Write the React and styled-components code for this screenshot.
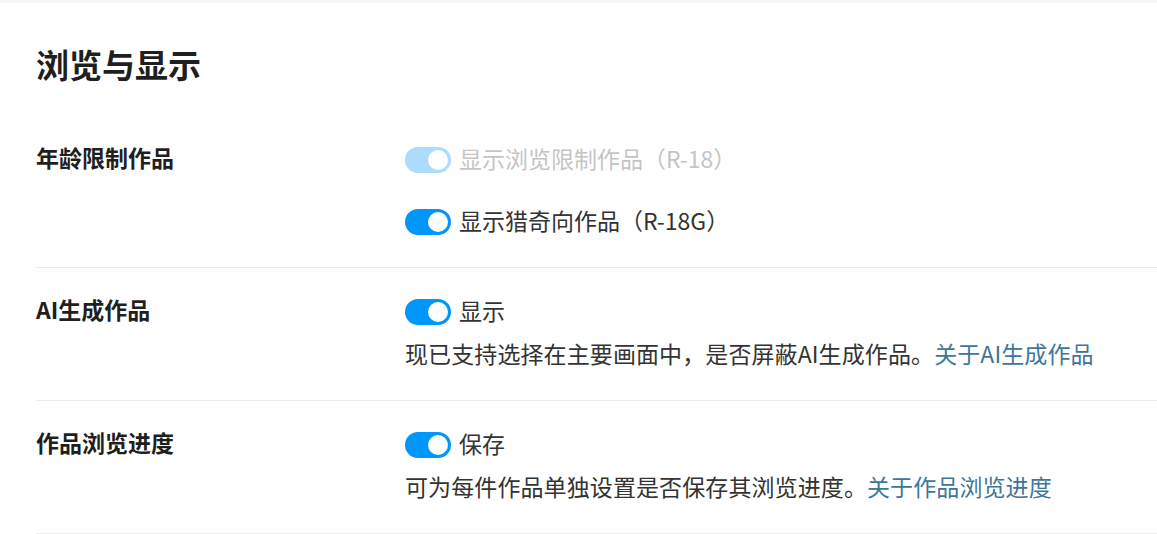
import React from 'react';
import styled, { createGlobalStyle } from 'styled-components';

const GlobalStyle = createGlobalStyle`
  body {
    margin: 0;
    background: #f5f5f5;
    font-family: "Noto Sans CJK SC", "Noto Sans", sans-serif;
  }
`;

const Page = styled.div`
  padding-top: 3px;
  overflow: hidden;
`;

const Card = styled.section`
  background: #ffffff;
  padding: 37px 0 0 36px;
  min-height: 531px;
  box-sizing: border-box;
`;

const Title = styled.h2`
  margin: 0 0 28px;
  font-size: 33px;
  line-height: 48px;
  font-weight: 700;
  color: #1f1f1f;
`;

const Row = styled.div`
  display: grid;
  grid-template-columns: 369px 1fr;
  padding: 31px 0 32px;
  border-bottom: 1px solid #ebebeb;
`;

const Label = styled.div`
  margin-top: -3px;
  font-size: 23px;
  line-height: 26px;
  font-weight: 700;
  color: #1f1f1f;
`;

const Options = styled.div`
  display: flex;
  flex-direction: column;
  gap: 36px;
`;

const Group = styled.div`
  display: flex;
  flex-direction: column;
`;

const OptionLine = styled.label`
  display: flex;
  align-items: center;
  gap: 8px;
  font-size: 23px;
  line-height: 26px;
  color: ${(p) => (p.disabled ? '#c5c5c5' : '#333333')};
  white-space: nowrap;
`;

const OptionText = styled.span`
  margin-top: -5px;
`;

const Track = styled.span`
  position: relative;
  flex: none;
  width: 46px;
  height: 26px;
  border-radius: 13px;
  background: #0096fa;
  opacity: ${(p) => (p.disabled ? 0.32 : 1)};
`;

const Knob = styled.span`
  position: absolute;
  top: 3px;
  right: 3px;
  width: 20px;
  height: 20px;
  border-radius: 50%;
  background: #ffffff;
`;

const Description = styled.p`
  margin: 15px 0 2px;
  font-size: 23px;
  line-height: 26px;
  color: #333333;
  white-space: nowrap;
  letter-spacing: 0.1px;
`;

const Link = styled.a`
  color: #3d7699;
  text-decoration: none;
`;

const Toggle = ({ disabled, children }) => (
  <OptionLine disabled={disabled}>
    <Track disabled={disabled}>
      <Knob />
    </Track>
    <OptionText>{children}</OptionText>
  </OptionLine>
);

const App = () => {
  return (
    <Page>
      <GlobalStyle />
      <Card>
        <Title>浏览与显示</Title>
        <Row>
          <Label>年龄限制作品</Label>
          <Options>
            <Toggle disabled>显示浏览限制作品（R-18）</Toggle>
            <Toggle>显示猎奇向作品（R-18G）</Toggle>
          </Options>
        </Row>
        <Row>
          <Label>AI生成作品</Label>
          <Group>
            <Toggle>显示</Toggle>
            <Description>
              现已支持选择在主要画面中，是否屏蔽AI生成作品。<Link href="#">关于AI生成作品</Link>
            </Description>
          </Group>
        </Row>
        <Row>
          <Label>作品浏览进度</Label>
          <Group>
            <Toggle>保存</Toggle>
            <Description>
              可为每件作品单独设置是否保存其浏览进度。<Link href="#">关于作品浏览进度</Link>
            </Description>
          </Group>
        </Row>
      </Card>
    </Page>
  );
};

export default App;
